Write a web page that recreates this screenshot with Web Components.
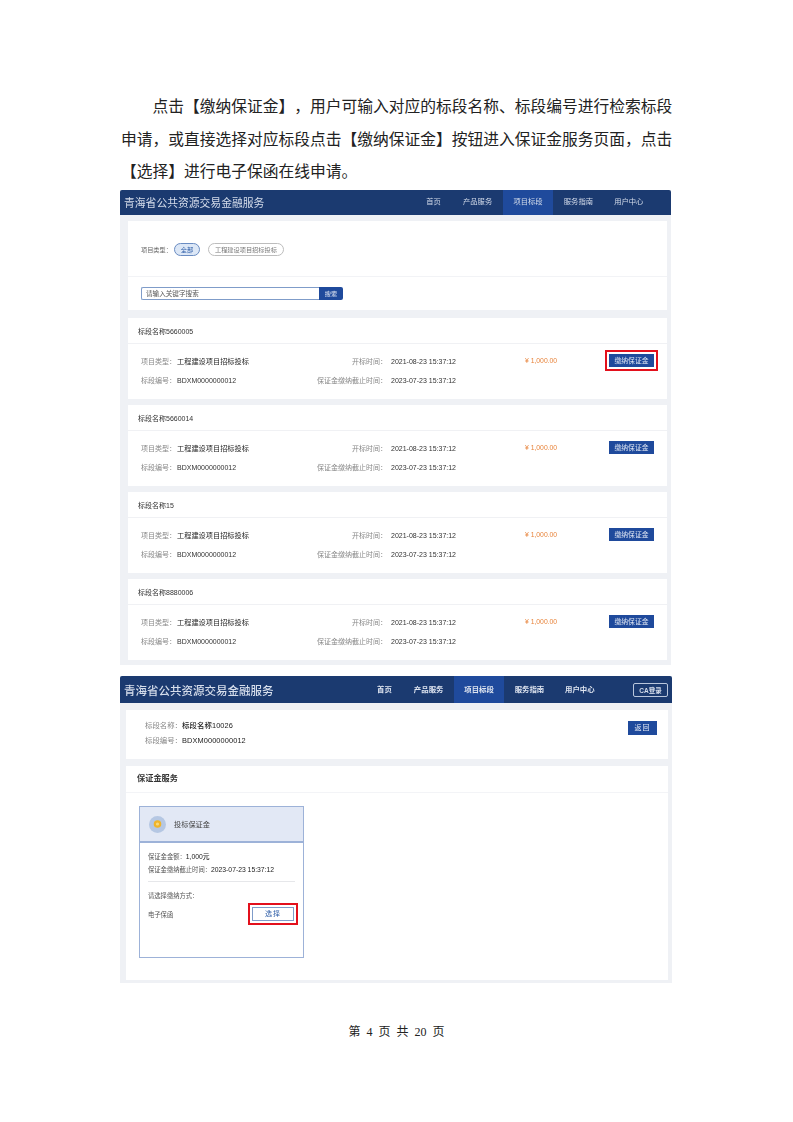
<!DOCTYPE html>
<html lang="zh-CN">
<head>
<meta charset="utf-8">
<title>缴纳保证金</title>
<style>
    html, body { margin: 0; background: #fff; }
    body { font-family: "Liberation Sans", "Noto Sans CJK SC", sans-serif; }
</style>
</head>
<body>
<doc-page page="4" total="20">
    <doc-text>
        <div class="first">点击【缴纳保证金】，用户可输入对应的标段名称、标段编号进行检索标段</div>
        <div>申请，或直接选择对应标段点击【缴纳保证金】按钮进入保证金服务页面，点击</div>
        <div>【选择】进行电子保函在线申请。</div>
    </doc-text>

    <app-shot variant="list">
        <app-nav brand="青海省公共资源交易金融服务" items="首页,产品服务,项目标段,服务指南,用户中心"></app-nav>
        <filter-card></filter-card>
        <bid-card name="标段名称5660005" marked></bid-card>
        <bid-card name="标段名称5660014"></bid-card>
        <bid-card name="标段名称15"></bid-card>
        <bid-card name="标段名称8880006"></bid-card>
    </app-shot>

    <app-shot variant="detail">
        <app-nav large login brand="青海省公共资源交易金融服务" items="首页,产品服务,项目标段,服务指南,用户中心"></app-nav>
        <bid-summary name="标段名称10026" code="BDXM0000000012"></bid-summary>
        <deposit-section></deposit-section>
    </app-shot>
</doc-page>

<script>
const CJK = '"Liberation Sans", "Noto Sans CJK SC", sans-serif';
const NAVY = '#1b3a70';
const BLUE = '#1f4a9c';
const RED = '#e3101c';

class DocPage extends HTMLElement {
    connectedCallback() {
        this.attachShadow({ mode: 'open' });
        this.shadowRoot.innerHTML = `
            <style>
                :host { display: block; width: 793px; height: 1122px; padding-top: 91px; box-sizing: border-box; overflow: hidden; }
                .foot {
                    margin-top: 41px;
                    display: flex; justify-content: center; gap: 6px;
                    font: 12px/16px "Liberation Serif", "Noto Sans CJK SC", serif;
                    color: #222;
                }
            </style>
            <slot></slot>
            <div class="foot"><span>第</span><span>${this.getAttribute('page')}</span><span>页</span><span>共</span><span>${this.getAttribute('total')}</span><span>页</span></div>
        `;
    }
}

class DocText extends HTMLElement {
    connectedCallback() {
        this.attachShadow({ mode: 'open' });
        this.shadowRoot.innerHTML = `
            <style>
                :host {
                    display: block; margin-left: 121px; width: 560px; height: 99px;
                    font: 15.75px/32.5px "Liberation Serif", "Noto Sans CJK SC", serif;
                    color: #222; white-space: nowrap; text-spacing-trim: space-all;
                }
                ::slotted(.first) { text-indent: 2em; }
            </style>
            <slot></slot>
        `;
    }
}

class AppShot extends HTMLElement {
    connectedCallback() {
        this.attachShadow({ mode: 'open' });
        this.shadowRoot.innerHTML = `
            <style>
                :host {
                    display: block; margin-left: 120px; background: #eff1f5; box-sizing: border-box;
                    font-family: ${CJK}; filter: blur(.4px);
                }
                :host([variant=list]) { width: 551px; height: 475px; padding: 0 4px 0 8px; }
                :host([variant=detail]) { width: 552px; height: 307px; margin-top: 11px; padding: 0 4px 0 6px; }
                ::slotted(app-nav) { margin-left: -8px; margin-right: -4px; }
                :host([variant=detail]) ::slotted(app-nav) { margin-left: -6px; }
            </style>
            <slot></slot>
        `;
    }
}

class AppNav extends HTMLElement {
    connectedCallback() {
        this.attachShadow({ mode: 'open' });
        const items = this.getAttribute('items').split(',');
        this.shadowRoot.innerHTML = `
            <style>
                :host {
                    display: flex; align-items: stretch; height: 25px; background: ${NAVY};
                    border-radius: 2px 2px 0 0; color: #d5ddeb; padding-right: 17px;
                }
                :host([large]) { height: 27px; padding-right: 4px; }
                .brand { font-size: 10.8px; line-height: 24px; padding: 1px 0 0 4px; margin-right: auto; white-space: nowrap; }
                :host([large]) .brand { font-size: 11.5px; line-height: 28px; font-weight: 500; }
                .item { width: 50.4px; padding-bottom: 3px; box-sizing: border-box; font-size: 7.3px; display: flex; align-items: center; justify-content: center; white-space: nowrap; }
                :host([large]) .item { font-weight: 700; font-size: 7.4px; color: #dfe5f0; padding-bottom: 2px; }
                .item.home { width: 38px; }
                .item.on { background: #1f4a9c; }
                .login {
                    align-self: center; margin-left: 28px; width: 35px; height: 14px; box-sizing: border-box;
                    border: 1px solid #b9c6dc; border-radius: 2px; font-size: 6.5px; font-weight: 700;
                    display: flex; align-items: center; justify-content: center; white-space: nowrap;
                }
            </style>
            <div class="brand">${this.getAttribute('brand')}</div>
            ${items.map((t, i) => `<div class="item${i === 0 ? ' home' : ''}${i === 2 ? ' on' : ''}">${t}</div>`).join('')}
            ${this.hasAttribute('login') ? '<div class="login">CA登录</div>' : ''}
        `;
    }
}

class FilterCard extends HTMLElement {
    connectedCallback() {
        this.attachShadow({ mode: 'open' });
        this.shadowRoot.innerHTML = `
            <style>
                :host { display: block; margin: 6px 0 8px; height: 89px; background: #fff; font-size: 6.2px; color: #666; }
                .types { display: flex; align-items: center; height: 56px; padding: 1px 0 0 13px; box-sizing: border-box; border-bottom: 1px solid #f2f3f6; }
                .pill { height: 13px; box-sizing: border-box; border-radius: 7px; display: flex; align-items: center; justify-content: center; white-space: nowrap; }
                .all { width: 26px; margin-left: 2px; background: #dce7f6; border: 1px solid #6a8cc2; color: #2a5aa5; }
                .other { width: 76px; margin-left: 8px; border: 1px solid #bdbdbd; color: #777; }
                .search { display: flex; height: 13px; margin: 10px 0 0 13px; }
                .input { width: 178px; box-sizing: border-box; border: 1px solid #7f9cc9; border-right: 0; border-radius: 2px 0 0 2px; padding-left: 4px; line-height: 11px; font-size: 6.6px; color: #555; }
                .go { width: 24px; background: ${BLUE}; color: #dfe6f3; border-radius: 0 2px 2px 0; text-align: center; line-height: 13px; }
            </style>
            <div class="types">
                <span>项目类型：</span>
                <span class="pill all">全部</span>
                <span class="pill other">工程建设项目招标投标</span>
            </div>
            <div class="search">
                <div class="input">请输入关键字搜索</div>
                <div class="go">搜索</div>
            </div>
        `;
    }
}

class BidCard extends HTMLElement {
    connectedCallback() {
        this.attachShadow({ mode: 'open' });
        this.shadowRoot.innerHTML = `
            <style>
                :host { display: block; height: 81px; margin-bottom: 6px; background: #fff; font-size: 7px; color: #888; white-space: nowrap; }
                .title { height: 26px; box-sizing: border-box; padding-left: 10px; line-height: 27px; border-bottom: 1px solid #f0f1f4; color: #333; }
                .body { display: flex; align-items: flex-start; padding: 8px 13px 0; }
                .info { display: grid; grid-template-columns: 36px 140px 74px 65px; grid-auto-rows: 19px; align-items: baseline; line-height: 19px; }
                .end { text-align: right; padding-right: 4px; }
                .val { color: #333; }
                .val.strong { font-size: 7.2px; color: #222; }
                .amount { margin-left: 69px; line-height: 18px; color: #e8843c; font-size: 6.8px; }
                .pay {
                    margin: 2px 0 0 auto; width: 45px; height: 13px; background: ${BLUE}; color: #dfe6f3;
                    font-size: 6.8px; line-height: 13px; text-align: center;
                }
                :host([marked]) .pay { outline: 2px solid ${RED}; outline-offset: 2px; }
            </style>
            <div class="title">${this.getAttribute('name')}</div>
            <div class="body">
                <div class="info">
                    <span>项目类型：</span><span class="val strong">工程建设项目招标投标</span>
                    <span class="end">开标时间：</span><span class="val">2021-08-23 15:37:12</span>
                    <span>标段编号：</span><span class="val">BDXM0000000012</span>
                    <span class="end">保证金缴纳截止时间：</span><span class="val">2023-07-23 15:37:12</span>
                </div>
                <div class="amount">¥ 1,000.00</div>
                <div class="pay">缴纳保证金</div>
            </div>
        `;
    }
}

class BidSummary extends HTMLElement {
    connectedCallback() {
        this.attachShadow({ mode: 'open' });
        this.shadowRoot.innerHTML = `
            <style>
                :host { display: flex; justify-content: space-between; align-items: flex-start; height: 49px; margin-top: 7px; padding: 8px 11px 0 19px; box-sizing: border-box; background: #fff; font-size: 7.4px; color: #888; }
                .row { line-height: 15px; }
                b { color: #222; font-weight: 500; letter-spacing: .1px; }
                .back { margin-top: 3px; width: 29px; height: 14px; background: ${BLUE}; color: #e4e9f4; font-size: 7px; line-height: 14px; text-align: center; letter-spacing: 1px; }
            </style>
            <div>
                <div class="row">标段名称：<b>${this.getAttribute('name')}</b></div>
                <div class="row">标段编号：<b>${this.getAttribute('code')}</b></div>
            </div>
            <div class="back">返回</div>
        `;
    }
}

class DepositSection extends HTMLElement {
    connectedCallback() {
        this.attachShadow({ mode: 'open' });
        this.shadowRoot.innerHTML = `
            <style>
                :host { display: block; height: 214px; margin-top: 7px; background: #fff; font-size: 6.3px; color: #555; white-space: nowrap; }
                .title { height: 27px; box-sizing: border-box; padding-left: 11px; line-height: 25px; font-size: 8.2px; font-weight: 700; color: #333; border-bottom: 1px solid #f3f4f7; }
                .box { width: 165px; height: 152px; margin: 13px 0 0 13px; box-sizing: border-box; border: 1px solid #9db2d8; }
                .head { display: flex; align-items: center; height: 36px; box-sizing: border-box; background: #e2e8f5; border-bottom: 2px solid #9db2d8; padding-left: 9px; font-size: 7.2px; color: #444; }
                .head svg { margin-right: 8px; }
                .main { padding: 7px 8px 0; }
                .row { line-height: 13px; }
                b { font-weight: 500; font-size: 6.8px; color: #222; }
                hr { border: 0; border-top: 1px solid #e6e7ea; margin: 5px 0 7px; }
                .way { display: flex; justify-content: space-between; align-items: center; margin-top: 5px; padding-right: 1px; }
                .pick {
                    width: 42px; height: 14px; box-sizing: border-box; border: 1px solid #7f9cc9;
                    color: #2a5aa5; text-align: center; line-height: 12px; letter-spacing: 1px; font-size: 7px;
                    outline: 2px solid ${RED}; outline-offset: 2px;
                }
            </style>
            <div class="title">保证金服务</div>
            <div class="box">
                <div class="head">
                    <svg width="17" height="17" viewBox="0 0 17 17"><circle cx="8.5" cy="8.5" r="8.5" fill="#b5c7e3"/><circle cx="8.5" cy="8" r="3.8" fill="#f0b429"/><circle cx="8.5" cy="8" r="1.6" fill="#f8d97a"/></svg>
                    <span>投标保证金</span>
                </div>
                <div class="main">
                    <div class="row">保证金金额：<b>1,000元</b></div>
                    <div class="row">保证金缴纳截止时间：<b>2023-07-23 15:37:12</b></div>
                    <hr>
                    <div class="row">请选择缴纳方式：</div>
                    <div class="way"><span>电子保函</span><span class="pick">选择</span></div>
                </div>
            </div>
        `;
    }
}

customElements.define('doc-page', DocPage);
customElements.define('doc-text', DocText);
customElements.define('app-shot', AppShot);
customElements.define('app-nav', AppNav);
customElements.define('filter-card', FilterCard);
customElements.define('bid-card', BidCard);
customElements.define('bid-summary', BidSummary);
customElements.define('deposit-section', DepositSection);
</script>
</body>
</html>
